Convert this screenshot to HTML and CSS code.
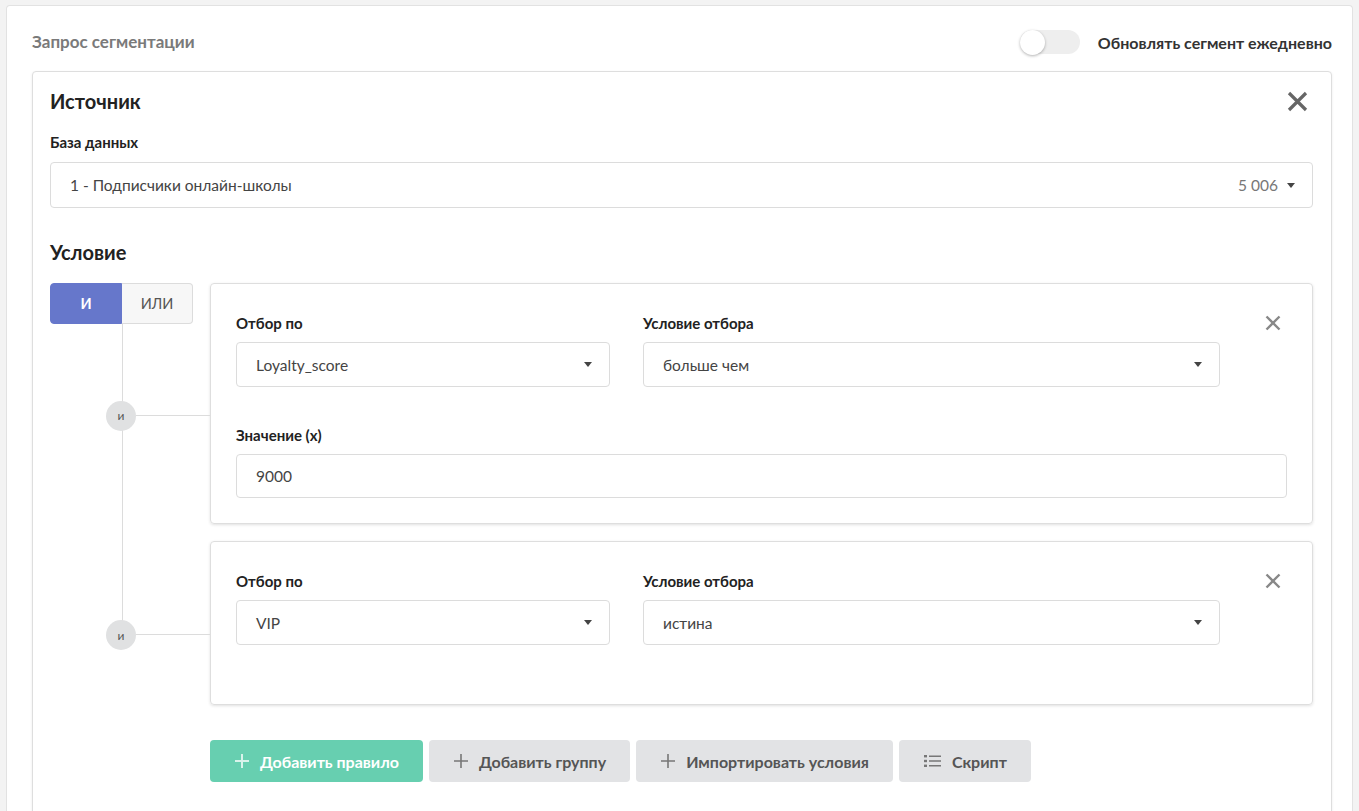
FILE: index.html
```html
<!DOCTYPE html>
<html lang="ru">
<head>
<meta charset="utf-8">
<title>Запрос сегментации</title>
<link rel="stylesheet" href="styles.css">
</head>
<body>
<div class="page">
  <header class="page-head">
    <h1 class="page-title">Запрос сегментации</h1>
    <div class="daily">
      <span class="switch"><span class="knob"></span></span>
      <span class="daily-text">Обновлять сегмент ежедневно</span>
    </div>
  </header>

  <section class="card source">
    <div class="card-head">
      <h2 class="card-title">Источник</h2>
      <span class="close-lg">
        <svg width="21" height="21" viewBox="0 0 21 21"><path d="M2 2 L19 19 M19 2 L2 19" stroke="#666" stroke-width="3.2" fill="none"/></svg>
      </span>
    </div>
    <div class="label">База данных</div>
    <div class="select db">
      <span class="value">1 - Подписчики онлайн-школы</span>
      <span class="count">5 006</span>
      <span class="caret"></span>
    </div>

    <h2 class="card-title cond-title">Условие</h2>

    <div class="cond">
      <div class="logic">
        <span class="logic-btn on">И</span>
        <span class="logic-btn">ИЛИ</span>
      </div>

      <div class="rules">
        <div class="rule">
          <span class="node">и</span>
          <div class="rule-body">
            <div class="fields">
              <div class="field f1">
                <div class="label">Отбор по</div>
                <div class="select"><span class="value">Loyalty_score</span><span class="caret"></span></div>
              </div>
              <div class="field f2">
                <div class="label">Условие отбора</div>
                <div class="select"><span class="value">больше чем</span><span class="caret"></span></div>
              </div>
              <span class="close-sm">
                <svg width="16" height="16" viewBox="0 0 16 16"><path d="M1.5 1.5 L14.5 14.5 M14.5 1.5 L1.5 14.5" stroke="#888" stroke-width="2.4" fill="none"/></svg>
              </span>
            </div>
            <div class="field full">
              <div class="label">Значение (x)</div>
              <div class="select input"><span class="value">9000</span></div>
            </div>
          </div>
        </div>

        <div class="rule">
          <span class="node">и</span>
          <div class="rule-body short">
            <div class="fields">
              <div class="field f1">
                <div class="label">Отбор по</div>
                <div class="select"><span class="value">VIP</span><span class="caret"></span></div>
              </div>
              <div class="field f2">
                <div class="label">Условие отбора</div>
                <div class="select"><span class="value">истина</span><span class="caret"></span></div>
              </div>
              <span class="close-sm">
                <svg width="16" height="16" viewBox="0 0 16 16"><path d="M1.5 1.5 L14.5 14.5 M14.5 1.5 L1.5 14.5" stroke="#888" stroke-width="2.4" fill="none"/></svg>
              </span>
            </div>
          </div>
        </div>
      </div>

      <div class="actions">
        <button class="btn primary">
          <svg width="14" height="14" viewBox="0 0 14 14"><path d="M7 0 V14 M0 7 H14" stroke="#fff" stroke-opacity="0.75" stroke-width="2" fill="none"/></svg>
          <span>Добавить правило</span>
        </button>
        <button class="btn">
          <svg width="14" height="14" viewBox="0 0 14 14"><path d="M7 0 V14 M0 7 H14" stroke="#777" stroke-width="1.6" fill="none"/></svg>
          <span>Добавить группу</span>
        </button>
        <button class="btn">
          <svg width="14" height="14" viewBox="0 0 14 14"><path d="M7 0 V14 M0 7 H14" stroke="#777" stroke-width="1.6" fill="none"/></svg>
          <span>Импортировать условия</span>
        </button>
        <button class="btn">
          <svg width="17" height="14" viewBox="0 0 17 14"><g fill="#777"><rect x="0" y="1" width="3" height="2.4"/><rect x="0" y="5.8" width="3" height="2.4"/><rect x="0" y="10.6" width="3" height="2.4"/></g><g stroke="#777" stroke-width="1.6"><path d="M5 2.2 H17 M5 7 H17 M5 11.8 H17"/></g></svg>
          <span>Скрипт</span>
        </button>
      </div>
    </div>
  </section>
</div>
</body>
</html>
```

FILE: styles.css
```css
* { box-sizing: border-box; }

body {
  margin: 0;
  background: #f3f3f3;
  font-family: "Lato", "Liberation Sans", sans-serif;
  color: #222;
}

.page {
  margin: 5px 6px 0 6px;
  background: #fff;
  border: 1px solid #e2e2e2;
  border-bottom: none;
  border-radius: 4px 4px 0 0;
  padding: 0 20px 0 25px;
  height: 820px;
}

.page-head {
  display: flex;
  align-items: center;
  justify-content: space-between;
  padding: 24px 0 17px;
}

.page-title {
  margin: 0;
  font-size: 17px;
  line-height: 24px;
  font-weight: 700;
  color: #7a7a7a;
}

.daily {
  display: flex;
  align-items: center;
  gap: 18px;
}

.switch {
  width: 60px;
  height: 24px;
  border-radius: 12px;
  background: #eeeeee;
  display: flex;
  align-items: center;
}

.knob {
  width: 25px;
  height: 25px;
  border-radius: 50%;
  background: #fff;
  box-shadow: 0 1px 3px rgba(0,0,0,0.3);
}

.daily-text {
  font-size: 16px;
  font-weight: 700;
  color: #333;
}

.card {
  border: 1px solid #dedede;
  border-radius: 4px;
  box-shadow: 0 1px 3px rgba(0,0,0,0.08);
  background: #fff;
}

.source {
  padding: 17px 18px 60px 17px;
}

.card-head {
  display: flex;
  align-items: center;
  justify-content: space-between;
}

.card-title {
  margin: 0;
  font-size: 20px;
  line-height: 24px;
  font-weight: 700;
  color: #222;
}

.close-lg {
  display: flex;
  margin-right: 5px;
}

.label {
  font-size: 15px;
  line-height: 20px;
  font-weight: 700;
  color: #222;
}

.source > .label {
  margin-top: 19px;
}

.select {
  display: flex;
  align-items: center;
  height: 45px;
  border: 1px solid #dcdcdc;
  border-radius: 4px;
  padding: 0 17px 0 19px;
  font-size: 15.5px;
  color: #444;
  margin-top: 8px;
  background: #fff;
}

.select .value {
  flex: 1;
}

.select.db {
  height: 46px;
  margin-top: 10px;
}

.count {
  color: #777;
  margin-right: 9px;
}

.caret {
  width: 0;
  height: 0;
  border-left: 4px solid transparent;
  border-right: 4px solid transparent;
  border-top: 5px solid #444;
}

.cond-title {
  margin-top: 32px;
}

.cond {
  position: relative;
  margin-top: 19px;
}

.cond::before {
  content: "";
  position: absolute;
  left: 72px;
  top: 41px;
  height: 310px;
  border-left: 1px solid #dcdcdc;
}

.logic {
  position: absolute;
  left: 0;
  top: 0;
  display: flex;
  width: 143px;
  height: 41px;
  z-index: 1;
}

.logic-btn {
  flex: 1;
  display: flex;
  align-items: center;
  justify-content: center;
  font-size: 14.5px;
  color: #555;
  background: #f7f7f7;
  border: 1px solid #dcdcdc;
  border-left: none;
  border-radius: 0 4px 4px 0;
}

.logic-btn.on {
  background: #6677cb;
  color: #fff;
  font-weight: 700;
  border: 1px solid #6677cb;
  border-radius: 4px 0 0 4px;
}

.rules {
  margin-left: 160px;
  display: flex;
  flex-direction: column;
  gap: 17px;
}

.rule {
  position: relative;
}

.node {
  position: absolute;
  left: -104px;
  top: calc(50% + 12px);
  transform: translateY(-50%);
  width: 30px;
  height: 30px;
  border-radius: 50%;
  background: #e0e1e2;
  color: #555;
  font-size: 12px;
  display: flex;
  align-items: center;
  justify-content: center;
}

.node::after {
  content: "";
  position: absolute;
  left: 30px;
  top: 14px;
  width: 74px;
  border-top: 1px solid #dcdcdc;
}

.rule-body {
  border: 1px solid #dedede;
  border-radius: 4px;
  box-shadow: 0 1px 3px rgba(0,0,0,0.12);
  padding: 29px 25px 25px 25px;
}

.rule-body.short {
  padding-bottom: 59px;
}

.fields {
  display: flex;
  align-items: flex-start;
}

.field.f1 { width: 374px; }
.field.f2 { width: 577px; margin-left: 33px; }

.close-sm {
  display: flex;
  margin-left: 45px;
  margin-top: 2px;
}

.field .select {
  margin-top: 9px;
}

.field.full {
  margin-top: 38px;
}

.field.full .select {
  height: 44px;
  margin-top: 9px;
}

.actions {
  margin-left: 160px;
  margin-top: 35px;
  display: flex;
  gap: 6px;
}

.btn {
  display: flex;
  align-items: center;
  gap: 11px;
  height: 42px;
  border: none;
  border-radius: 4px;
  background: #e2e3e5;
  color: #555;
  font-family: inherit;
  font-size: 16px;
  font-weight: 700;
  padding: 0 24px 0 25px;
}

.btn.primary {
  background: #67cfb0;
  color: #fff;
}
```
